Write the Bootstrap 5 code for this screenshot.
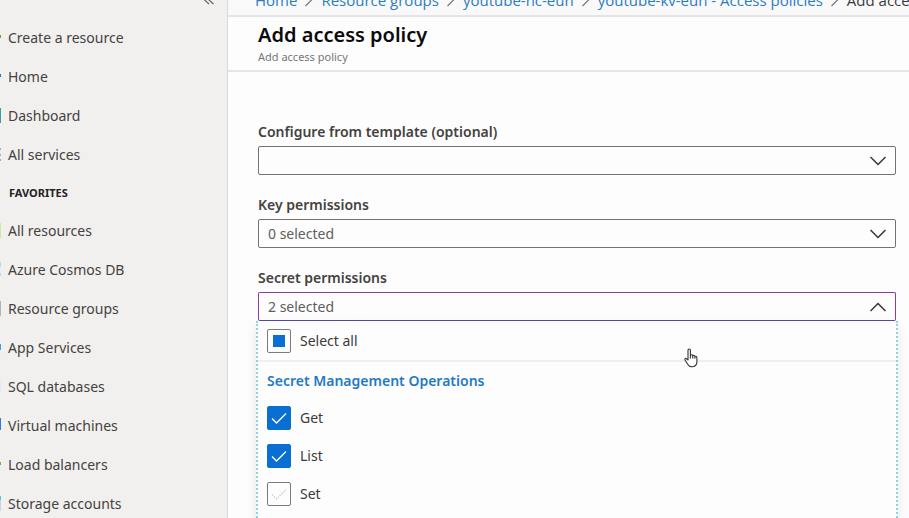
<!DOCTYPE html>
<html lang="en">
<head>
<meta charset="utf-8">
<meta name="viewport" content="width=device-width, initial-scale=1">
<title>Add access policy</title>
<link href="https://cdn.jsdelivr.net/npm/bootstrap@5.3.0/dist/css/bootstrap.min.css" rel="stylesheet">
<style>
body { font-family: "Noto Sans", "Open Sans", sans-serif; font-size: 14px; line-height: 20px; color: #3b3a39; background: #fefdfe; }
.side-menu { width: 228px; background: #f2f0ef; border-right: 1px solid #dddbda; }
.side-top { height: 18px; padding-right: 13px; }
.side-link { height: 39px; gap: 7px; color: #444240; text-decoration: none; white-space: nowrap; }
.side-link svg { width: 1px; height: 16px; flex: none; }
.side-title { height: 37px; padding-left: 9px; font-size: 11px; font-weight: 700; color: #222; }
.collapse-btn { line-height: 0; height: 12px; }
.crumbs { height: 17px; padding: 0 0 5px 27px; border-bottom: 2px solid #e6e4e4; background: #faf9f9; }
.crumbs ol { gap: 8px; font-family: "Open Sans", "Noto Sans", sans-serif; font-size: 15px; white-space: nowrap; }
.crumbs li { gap: 8px; }
.crumbs a { color: #2b7cc4; text-decoration: none; }
.blade-head { padding: 4px 30px 5px; border-bottom: 2px solid #e6e4e4; }
.blade-head h1 { font-size: 20px; line-height: 28px; font-weight: 600; color: #0b0b0b; }
.blade-head p { font-size: 11px; line-height: 16px; color: #777573; }
.policy-form { padding: 48px 13px 0 30px; }
.field { margin-bottom: 18px; }
.field label.field-name { font-weight: 600; line-height: 24px; margin-bottom: 2px; color: #444240; }
.field .form-select {
  height: 29px; padding: 0 40px 0 9px; font-size: 14px; line-height: 20px; color: #605e5c;
  border: 1px solid #757371; border-radius: 2px; background-color: #fefdfe;
  background-image: url("data:image/svg+xml,%3Csvg xmlns='http://www.w3.org/2000/svg' viewBox='0 0 16 10'%3E%3Cpath d='M.5 1L8 8.500 15.500 1' fill='none' stroke='%23333' stroke-width='1.500'/%3E%3C/svg%3E");
  background-position: right 9px center; background-size: 16px 10px;
}
.field .form-select.is-open {
  border-color: #8a3d9e; border-bottom-color: #5148ac;
  background-image: url("data:image/svg+xml,%3Csvg xmlns='http://www.w3.org/2000/svg' viewBox='0 0 16 10'%3E%3Cpath d='M.5 9L8 1.500 15.500 9' fill='none' stroke='%23333' stroke-width='1.500'/%3E%3C/svg%3E");
}
.option-panel { margin: 0 -2px; border: 2px dotted #93d2dd; border-top: 0; box-shadow: 0 4px 10px rgba(0, 90, 110, .12); background: #fefdfe; }
.option-row { height: 38px; padding-left: 9px; gap: 9px; }
.option-row.all-row { height: 41px; border-bottom: 2px solid #efeef0; }
.option-row .form-check-input { width: 24px; height: 24px; margin: 0; border: 1px solid #7d7b79; border-radius: 2px; background-color: #fefdfe; background-size: 20px 20px; flex: none; }
.option-row .form-check-input:checked { background-color: #0a6fd3; border-color: #0a6fd3;
  background-image: url("data:image/svg+xml,%3Csvg xmlns='http://www.w3.org/2000/svg' viewBox='0 0 20 20'%3E%3Cpath d='M3 10.500l4.500 4.500L17 5.500' fill='none' stroke='%23fff' stroke-width='1.300'/%3E%3C/svg%3E"); }
.option-row .form-check-input:indeterminate { background-color: #fefdfe; border-color: #7d7b79;
  background-image: url("data:image/svg+xml,%3Csvg xmlns='http://www.w3.org/2000/svg' viewBox='0 0 20 20'%3E%3Cpath d='M4 4h12v12H4z' fill='%230a6fd3'/%3E%3C/svg%3E"); }
.option-row .form-check-input.faint:not(:checked) {
  background-image: url("data:image/svg+xml,%3Csvg xmlns='http://www.w3.org/2000/svg' viewBox='0 0 20 20'%3E%3Cpath d='M3 10.500l4.500 4.500L17 5.500' fill='none' stroke='%23cfcfcf' stroke-width='1.500' stroke-dasharray='1.500 1.200'/%3E%3C/svg%3E"); }
.option-title { padding: 9px 9px 8px; font-size: 14px; line-height: 20px; font-weight: 600; color: #1f7ac6; }
.hand { left: 684px; top: 348px; width: 14px; height: 20px; pointer-events: none; }
</style>
<script src="https://cdn.jsdelivr.net/npm/bootstrap@5.3.0/dist/js/bootstrap.bundle.min.js"></script>
</head>
<body>
<div class="d-flex vh-100 overflow-hidden position-relative">
  <nav class="side-menu flex-shrink-0" aria-label="Portal menu">
    <div class="side-top d-flex justify-content-end">
      <button type="button" class="collapse-btn btn p-0 border-0" aria-label="Collapse menu">
        <svg width="10" height="12" viewBox="0 0 10 12" fill="none" stroke="#666" stroke-width="1.2"><path d="M5 -5L0 -.5 5 4M9.500 -5L4.500 -.5 9.500 4"/></svg>
      </button>
    </div>
    <a class="side-link d-flex align-items-center" href="#"><svg viewBox="0 0 1 16"><path d="M0 5h1v3H0z" fill="#68a51c"/></svg>Create a resource</a>
    <a class="side-link d-flex align-items-center" href="#"><svg viewBox="0 0 1 16"><path d="M0 5h1v3H0z" fill="#2c78b8"/></svg>Home</a>
    <a class="side-link d-flex align-items-center" href="#"><svg viewBox="0 0 1 16"><path d="M0 0h1v15H0z" fill="#36a196"/></svg>Dashboard</a>
    <a class="side-link d-flex align-items-center" href="#"><svg viewBox="0 0 1 16"><path d="M0 1h1v2H0zM0 7h1v2H0zM0 12h1v2H0z" fill="#aaa"/></svg>All services</a>
    <div class="side-title d-flex align-items-center">FAVORITES</div>
    <a class="side-link d-flex align-items-center" href="#"><svg viewBox="0 0 1 16"><path d="M0 0h1v15H0z" fill="#cdeaa5"/></svg>All resources</a>
    <a class="side-link d-flex align-items-center" href="#"><svg viewBox="0 0 1 16"><path d="M0 0h1v5H0zM0 11h1v3H0z" fill="#a9def0"/></svg>Azure Cosmos DB</a>
    <a class="side-link d-flex align-items-center" href="#"><svg viewBox="0 0 1 16"><path d="M0 0h1v15H0z" fill="#b5b3b5"/></svg>Resource groups</a>
    <a class="side-link d-flex align-items-center" href="#"><svg viewBox="0 0 1 16"><path d="M0 4h1v6H0z" fill="#3aa0dc"/></svg>App Services</a>
    <a class="side-link d-flex align-items-center" href="#"><svg viewBox="0 0 1 16"><path d="M0 3h1v9H0z" fill="#e8e6e6"/></svg>SQL databases</a>
    <a class="side-link d-flex align-items-center" href="#"><svg viewBox="0 0 1 16"><path d="M0 0h1v12H0z" fill="#2a7fd0"/></svg>Virtual machines</a>
    <a class="side-link d-flex align-items-center" href="#"><svg viewBox="0 0 1 16"><path d="M0 5h1v3H0z" fill="#74b043"/></svg>Load balancers</a>
    <a class="side-link d-flex align-items-center" href="#"><svg viewBox="0 0 1 16"><path d="M0 0h1v4H0z" fill="#4fc6dc"/><path d="M0 4h1v11H0z" fill="#cfd3dc"/></svg>Storage accounts</a>
  </nav>

  <main class="flex-grow-1 overflow-hidden">
    <nav class="crumbs d-flex align-items-end" aria-label="Breadcrumb">
      <ol class="list-unstyled d-flex mb-0">
        <li class="d-flex align-items-center"><a href="#">Home</a><svg width="8" height="14" viewBox="0 0 8 14" fill="none" stroke="#777" stroke-width="1.200"><path d="M1 0L7.500 6 .5 13"/></svg></li>
        <li class="d-flex align-items-center"><a href="#">Resource groups</a><svg width="8" height="14" viewBox="0 0 8 14" fill="none" stroke="#777" stroke-width="1.200"><path d="M1 0L7.500 6 .5 13"/></svg></li>
        <li class="d-flex align-items-center"><a href="#">youtube-nc-eun</a><svg width="8" height="14" viewBox="0 0 8 14" fill="none" stroke="#777" stroke-width="1.200"><path d="M1 0L7.500 6 .5 13"/></svg></li>
        <li class="d-flex align-items-center"><a href="#">youtube-kv-eun - Access policies</a><svg width="8" height="14" viewBox="0 0 8 14" fill="none" stroke="#777" stroke-width="1.200"><path d="M1 0L7.500 6 .5 13"/></svg></li>
        <li aria-current="page">Add access policy</li>
      </ol>
    </nav>
    <header class="blade-head">
      <h1 class="mb-0">Add access policy</h1>
      <p class="mb-0">Add access policy</p>
    </header>
    <form class="policy-form">
      <div class="field">
        <label class="field-name d-block" for="template">Configure from template (optional)</label>
        <select class="form-select" id="template"><option></option></select>
      </div>
      <div class="field">
        <label class="field-name d-block" for="keys">Key permissions</label>
        <select class="form-select" id="keys"><option>0 selected</option></select>
      </div>
      <div class="field">
        <label class="field-name d-block" for="secrets">Secret permissions</label>
        <select class="form-select is-open" id="secrets"><option>2 selected</option></select>
        <div class="option-panel">
          <div class="option-row all-row d-flex align-items-center"><input class="form-check-input" type="checkbox" id="all"><label for="all">Select all</label></div>
          <h2 class="option-title mb-0">Secret Management Operations</h2>
          <div class="option-row d-flex align-items-center"><input class="form-check-input" type="checkbox" id="get" checked><label for="get">Get</label></div>
          <div class="option-row d-flex align-items-center"><input class="form-check-input" type="checkbox" id="list" checked><label for="list">List</label></div>
          <div class="option-row d-flex align-items-center"><input class="form-check-input faint" type="checkbox" id="set"><label for="set">Set</label></div>
          <div class="option-row"></div>
        </div>
      </div>
    </form>
  </main>

  <svg class="hand position-absolute" viewBox="0 0 14 20" fill="#fff" stroke="#333" stroke-width="1.1" stroke-linejoin="round" aria-hidden="true"><path d="M4 12V2.200a1.200 1.200 0 0 1 2.400 0V7q2-.8 2.300.6 1.900-.6 2.200.7 2-.3 2 1.500v4q0 4.500-4.500 5-3.200.2-4.700-2.600L1 12q-.5-1.600 1-1.600Z"/><path d="M6.400 7v3.500M8.700 7.600v3M10.900 8.300v2.500" fill="none"/></svg>
</div>
<script>document.getElementById('all').indeterminate = true;</script>
</body>
</html>
